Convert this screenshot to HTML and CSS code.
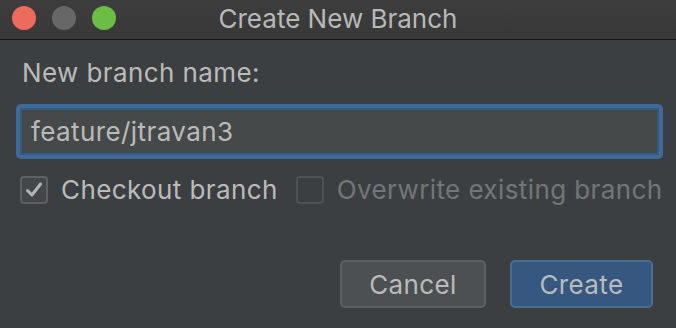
FILE: index.html
```html
<!DOCTYPE html>
<html>
<head>
<meta charset="utf-8">
<title>Create New Branch</title>
<link rel="stylesheet" href="styles.css">
</head>
<body>
<div class="window">
  <header class="titlebar">
    <div class="lights">
      <span class="light red"></span>
      <span class="light grey"></span>
      <span class="light green"></span>
    </div>
    <div class="title">Create New Branch</div>
  </header>
  <main class="content">
    <label class="label">New branch name:</label>
    <div class="field"><span class="field-text">feature/jtravan3</span></div>
    <div class="checks">
      <div class="check">
        <span class="box checked">
          <svg width="20" height="20" viewBox="0 0 20 20"><path d="M3.5 10.5 L8 15 L16.5 4" fill="none" stroke="#b4b4b4" stroke-width="3" stroke-linecap="round" stroke-linejoin="round"/></svg>
        </span>
        <span class="check-label">Checkout branch</span>
      </div>
      <div class="check disabled">
        <span class="box"></span>
        <span class="check-label">Overwrite existing branch</span>
      </div>
    </div>
    <div class="buttons">
      <button class="btn">Cancel</button>
      <button class="btn primary">Create</button>
    </div>
  </main>
</div>
</body>
</html>
```
FILE: styles.css
```css
* { box-sizing: border-box; }
html, body {
  margin: 0;
  padding: 0;
  width: 676px;
  height: 328px;
  overflow: hidden;
  background: #3c3f41;
}
body {
  font-family: "Inter", "Liberation Sans", sans-serif;
  font-size: 26px;
  letter-spacing: 0.4px;
  color: #bbbbbb;
}
.window {
  display: flex;
  flex-direction: column;
  height: 328px;
}
.titlebar {
  position: relative;
  height: 40px;
  background: linear-gradient(#3d3d3d, #383838);
  border-bottom: 1px solid #161616;
  display: flex;
  align-items: center;
  justify-content: center;
}
.lights {
  position: absolute;
  left: 12px;
  top: 6px;
  display: flex;
  gap: 16px;
}
.light {
  width: 24px;
  height: 24px;
  border-radius: 50%;
  display: block;
}
.red { background: #ed6a5e; }
.grey { background: #676767; }
.green { background: #6bbd45; }
.title {
  color: #b9b9b9;
  font-size: 26px;
  letter-spacing: 0;
  line-height: 32px;
  margin-top: -2px;
}
.content {
  display: flex;
  flex-direction: column;
  padding: 0 13px 0 16px;
}
.label {
  margin-top: 17px;
  margin-left: 6px;
  line-height: 32px;
}
.field {
  margin-top: 15px;
  height: 55px;
  border: 4px solid #3e6b9a;
  box-shadow: inset 0 0 0 2px #365a80;
  border-radius: 5px;
  background: #45494a;
  display: flex;
  align-items: center;
  padding-left: 11px;
}
.field-text {
  line-height: 32px;
  color: #bbbbbb;
}
.checks {
  margin-top: 17px;
  display: flex;
  align-items: center;
  gap: 18px;
  margin-left: 4px;
}
.check {
  display: flex;
  align-items: center;
  gap: 13px;
}
.box {
  width: 28px;
  height: 28px;
  border: 2px solid #5e6163;
  border-radius: 4px;
  background: #43474a;
  display: flex;
  align-items: center;
  justify-content: center;
}
.check-label { line-height: 28px; }
.disabled .box {
  border-color: #4f5254;
  background: #3c3f41;
}
.disabled .check-label { color: #747677; }
.buttons {
  margin-top: 56px;
  display: flex;
  justify-content: flex-end;
  gap: 24px;
  margin-right: 10px;
}
.btn {
  font-family: "Inter", "Liberation Sans", sans-serif;
  font-size: 26px;
  letter-spacing: 0.4px;
  color: #bbbbbb;
  height: 48px;
  width: 146px;
  border-radius: 5px;
  border: 2px solid #5c5f60;
  background: #4c5052;
  padding: 0;
}
.btn.primary {
  width: 143px;
  background: #365880;
  border-color: #4a6e8e;
}
```
